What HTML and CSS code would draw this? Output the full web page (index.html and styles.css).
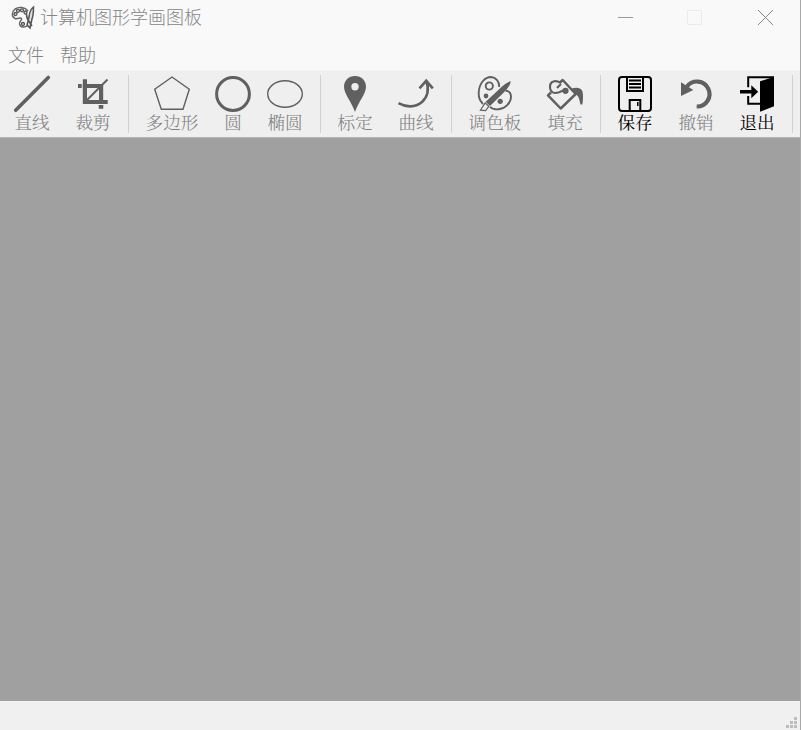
FILE: index.html
```html
<!DOCTYPE html>
<html lang="zh-CN">
<head>
<meta charset="utf-8">
<title>计算机图形学画图板</title>
<link rel="stylesheet" href="styles.css">
</head>
<body>
<div class="window">
  <header class="titlebar">
    <svg class="logo" viewBox="0 0 24 24"><path d="M17 5C14 1 8 .5 4 3 .5 6 .5 11 4 12.500c3 .8 5-1.500 6.500 0 1 1.500-2.500 3-2 5.500.8 3.500 5.500 4 8 1.500" fill="none" stroke="#666" stroke-width="1.500"/><g fill="#ddd" stroke="#555" stroke-width="1.300"><circle cx="4.500" cy="8" r="1.500"/><circle cx="7" cy="4.800" r="1.500"/><circle cx="11" cy="4.300" r="1.500"/><circle cx="14.500" cy="6.500" r="1.500"/><circle cx="12" cy="18" r="1.500"/></g><path d="M22.500 1c-3 2-4 5-4.500 10l-2 8 3 3 2-9c1.500-4 1.500-8 1.500-12zM15.500 8c0 4 1 6 3 8l2.500 4" fill="#ddd" stroke="#555" stroke-width="1.500"/></svg>
    <span class="title">计算机图形学画图板</span>
    <div class="controls">
      <svg viewBox="0 0 16 16"><path d="M0 8.500h15" stroke="#999"/></svg>
      <svg viewBox="0 0 16 16"><path d="M-.5 1.500h14v14h-14z" stroke="#ececec"/></svg>
      <svg viewBox="0 0 16 16"><path d="M0 1l15 15M15 1L0 16" stroke="#858585"/></svg>
    </div>
  </header>
  <nav class="menubar"><span>文件</span><span>帮助</span></nav>
  <div class="toolbar">
    <div class="tool"><svg viewBox="0 0 36 36"><path d="M1.700 34.300L34.300 1.500" stroke="#606060" stroke-width="3.600" stroke-linecap="round"/></svg><span>直线</span></div>
    <div class="tool"><svg viewBox="0 0 36 36"><path d="M3 8h3.700v4H3zM23.700 29h4.600v3.700h-4.600z" fill="#606060"/><path d="M9.900 3.300V26h22.800M7.700 10h18.400v16" fill="none" stroke="#606060" stroke-width="4.200"/><path d="M12 24L32.500 3.500" stroke="#606060" stroke-width="2"/></svg><span>裁剪</span></div>
    <i class="sep"></i>
    <div class="tool wide"><svg viewBox="0 0 36 36"><path d="M18 1l17.300 12.300L29 33.300H7.300L.7 13.300z" fill="none" stroke="#606060" stroke-width="1.400"/></svg><span>多边形</span></div>
    <div class="tool narrow"><svg viewBox="0 0 36 36"><circle cx="18" cy="18" r="16.400" fill="none" stroke="#606060" stroke-width="3"/></svg><span>圆</span></div>
    <div class="tool"><svg viewBox="0 0 36 36"><ellipse cx="18" cy="18" rx="17.300" ry="13.300" fill="none" stroke="#606060" stroke-width="1.400"/></svg><span>椭圆</span></div>
    <i class="sep"></i>
    <div class="tool"><svg viewBox="0 0 36 36"><path fill-rule="evenodd" d="M18 0C11.500 0 7 4.700 7 10.700 7 18 14.500 25.500 18 36c3.500-10.500 11-18 11-25.300C29 4.700 24.500 0 18 0zm0 7a3.700 3.700 0 1 1 0 7.400A3.700 3.700 0 0 1 18 7z" fill="#606060"/></svg><span>标定</span></div>
    <div class="tool"><svg viewBox="0 0 36 36"><path d="M.5 27.200C8 31.500 17 31.800 24 26c6-5.500 7-13 4.500-21M21.500 12.300l6.700-7.500 6.600 7.500" fill="none" stroke="#606060" stroke-width="2.600"/></svg><span>曲线</span></div>
    <i class="sep"></i>
    <div class="tool wide"><svg viewBox="0 0 36 36"><g fill="none" stroke="#606060" stroke-width="1.900"><path d="M6 28C3 25 1.500 21 1.700 17 2 7 8 1 14 1c5 .4 8.500 4.500 8.200 10M28.500 14.500c3.500.5 5.500 3 5.500 6 0 7-6.500 12.500-12.500 12.800-4 .2-6.500-.5-8.500-2.500"/><circle cx="12.300" cy="10" r="3.600"/></g><g fill="#606060"><circle cx="9" cy="20" r="2.400"/><circle cx="23.200" cy="25.300" r="2.600"/><path d="M33.500 5.300c.5 3-3 7-6 10.400L13 30l-4.300-4.200L24 11.500c3.200-3 6.500-5.600 9.500-6.200z"/></g><path d="M8.200 27l3.600 3.400-3.200 4.300-5.200-.5z" fill="#efefef" stroke="#606060" stroke-width="1.200"/></svg><span>调色板</span></div>
    <div class="tool"><svg viewBox="0 0 36 36"><path d="M12.500 7l3.200-3L28.700 18 13.700 32.500 1 19.300 4 16.500" fill="none" stroke="#606060" stroke-width="2.500" stroke-linejoin="round"/><path d="M13 6.500C9 4 4.500 5 3.200 8.500c-1 5 1.300 8.800 5 8.500 4 0 7-2.300 10-3.500M10 12l4-4" fill="none" stroke="#606060" stroke-width="2.200"/><circle cx="18.500" cy="14.800" r="3.100" fill="#606060"/><path d="M23.500 13c6-2 10.500-1.500 12 2.500.8 3.500.7 9-.2 13h-1.800c-1-4-1.500-8.500-4.500-10z" fill="#606060"/></svg><span>填充</span></div>
    <i class="sep"></i>
    <div class="tool enabled"><svg viewBox="0 0 36 36"><g fill="none" stroke="#000" stroke-width="2"><rect x="2" y="1" width="32" height="34" rx="3"/><path d="M10 1v14h16V1M12.700 35V24h10.600v11M12 4.500h12M12 8h12M12 11.500h12"/><path d="M20.800 26v4" stroke-width="1.500"/></g></svg><span>保存</span></div>
    <div class="tool"><svg viewBox="0 0 36 36"><path d="M18.700 30.500A12.500 12.500 0 1 0 9 10.500" fill="none" stroke="#606060" stroke-width="4.200"/><path d="M3 6.300V20l12.300-6z" fill="#606060"/></svg><span>撤销</span></div>
    <div class="tool enabled"><svg viewBox="0 0 36 36"><path d="M9.200 11.300V1.200H35M9.200 20v7.800H21" fill="none" stroke="#000" stroke-width="2"/><path d="M21 5.300L35 .7v29.600l-14 5.400zM1 14h11.300V9.300l6.900 6.400-6.900 6.500v-4.700H1z"/></svg><span>退出</span></div>
    <i class="sep"></i>
  </div>
  <main class="canvas"></main>
  <footer class="statusbar"><svg viewBox="0 0 12 12"><path d="M8 0h3v3H8zM4 4h3v3H4zM8 4h3v3H8zM0 8h3v3H0zM4 8h3v3H4zM8 8h3v3H8z" fill="#bdbdbd"/></svg></footer>
</div>
</body>
</html>
```
FILE: styles.css
```css
* { box-sizing: border-box; }
body {
  margin: 0;
  font-family: "Liberation Sans", "Noto Sans CJK SC", sans-serif;
  font-weight: 300;
  color: #858585;
}
svg { display: block; overflow: visible; }
.window {
  display: flex;
  flex-direction: column;
  width: 801px;
  height: 730px;
  border-right: 1px solid #a8a8a8;
  background: #f9f9f9;
}
.titlebar {
  display: flex;
  align-items: center;
  height: 35px;
  padding-left: 11px;
}
.logo { width: 24px; height: 24px; }
.title { margin-left: 5px; padding-top: 1px; font-size: 18px; line-height: 35px; }
.controls { display: flex; gap: 54px; margin-left: auto; padding: 0 26px 2px 0; }
.controls svg { width: 16px; height: 16px; fill: none; }
.menubar {
  display: flex;
  gap: 16px;
  height: 36px;
  padding-left: 8px;
  font-size: 18px;
  line-height: 42px;
  border-bottom: 1px solid #f3f3f3;
}
.toolbar {
  display: flex;
  height: 67px;
  padding: 5px 0 0 1.5px;
  background: #efefef;
  border-bottom: 1px solid #b4b4b4;
}
.tool {
  display: flex;
  flex: none;
  flex-direction: column;
  align-items: center;
  width: 61px;
  font-family: "Noto Serif CJK SC", "Noto Sans CJK SC", serif;
  font-size: 17.6px;
  line-height: 20px;
  color: #808080;
}
.tool svg { width: 36px; height: 36px; }
.tool.wide { width: 79px; }
.tool.narrow { width: 43px; }
.tool.enabled { color: #000; font-weight: 400; }
.sep {
  flex: none;
  width: 1px;
  height: 58px;
  margin: -1px 4px 0;
  background: #d0d0d0;
}
.canvas { flex: 1; background: #a0a0a0; }
.statusbar {
  display: flex;
  justify-content: flex-end;
  align-items: flex-end;
  height: 29px;
  padding: 0 2px 1px 0;
  background: #f0f0f0;
}
.statusbar svg { width: 12px; height: 12px; }
```
